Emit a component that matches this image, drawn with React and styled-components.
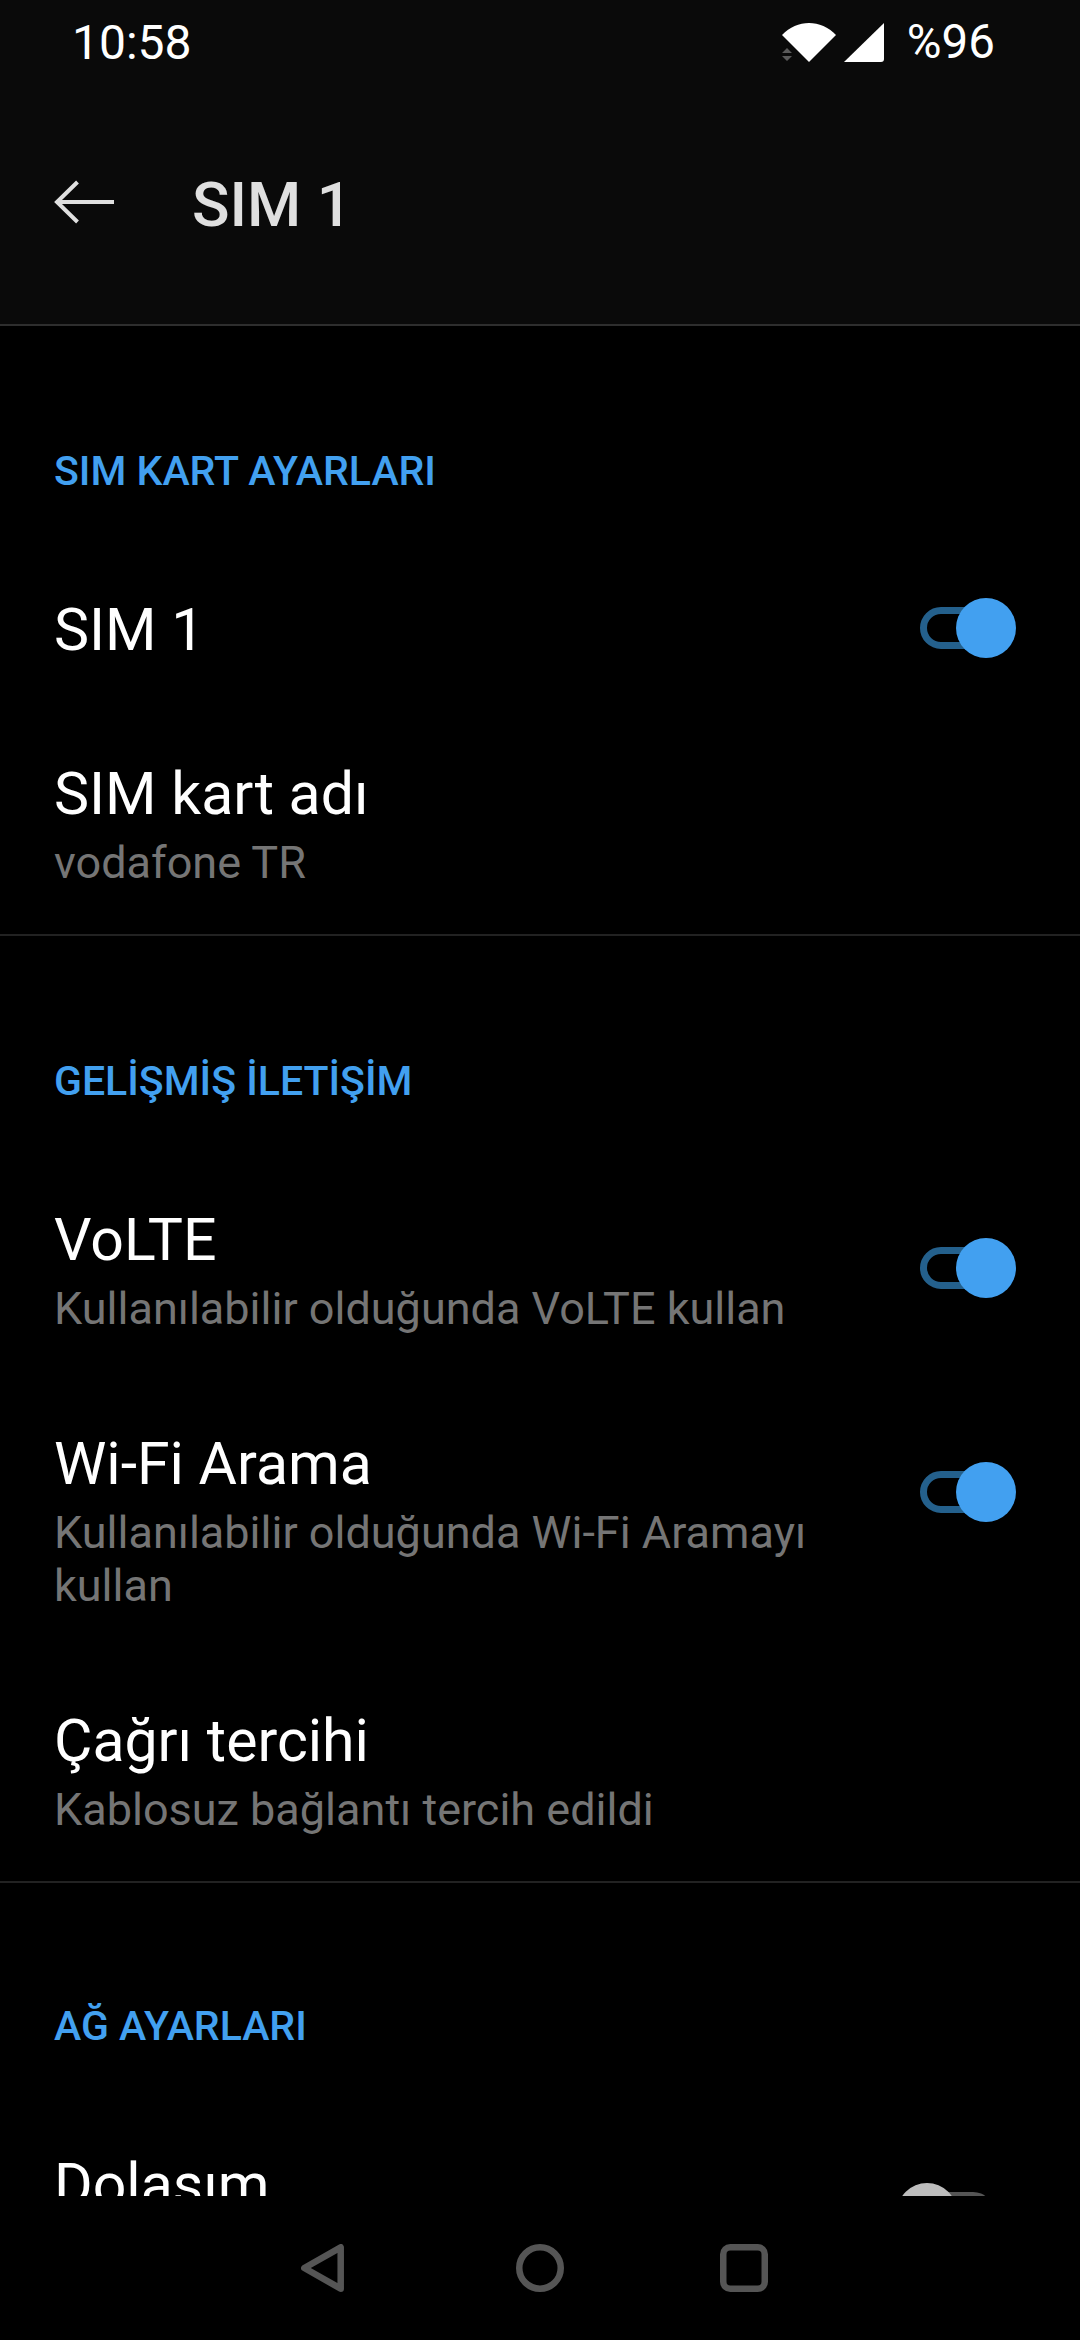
import React from "react";
import styled, { createGlobalStyle } from "styled-components";

const GlobalStyle = createGlobalStyle`
  html, body {
    margin: 0;
    padding: 0;
    background: #000;
  }
  * {
    box-sizing: border-box;
  }
`;

function App() {
  return (
    <Screen>
      <GlobalStyle />
      <Header>
        <StatusBar>
          <Clock>10:58</Clock>
          <StatusIcons>
            <svg width="54" height="39" viewBox="0 0 54 39">
              <path d="M0 12 C15 -4 39 -4 54 12 L27 39 Z" fill="#fff" />
              <path d="M0 30 L5 25 L10 30 Z M0 33 L10 33 L5 38 Z" fill="#5a5a5a" />
            </svg>
            <svg width="40" height="39" viewBox="0 0 40 39">
              <path d="M40 0 V36 Q40 39 37 39 H0 Z" fill="#fff" />
            </svg>
            <Battery>%96</Battery>
          </StatusIcons>
        </StatusBar>
        <Toolbar>
          <svg width="60" height="44" viewBox="0 0 60 44">
            <path d="M60 22 H4 M23.5 2 L3 22 L23.5 42" fill="none" stroke="#e0e0e0" strokeWidth="4" />
          </svg>
          <PageTitle>SIM 1</PageTitle>
        </Toolbar>
      </Header>
      <Content>
        <Section>
          <SectionTitle>SIM KART AYARLARI</SectionTitle>
          <Row $single>
            <RowText $single>
              <RowTitle>SIM 1</RowTitle>
            </RowText>
            <Switch $on />
          </Row>
          <Row>
            <RowText>
              <RowTitle>SIM kart adı</RowTitle>
              <RowSub>vodafone TR</RowSub>
            </RowText>
          </Row>
        </Section>
        <Section>
          <SectionTitle>GELİŞMİŞ İLETİŞİM</SectionTitle>
          <Row>
            <RowText>
              <RowTitle>VoLTE</RowTitle>
              <RowSub>Kullanılabilir olduğunda VoLTE kullan</RowSub>
            </RowText>
            <Switch $on $lowered />
          </Row>
          <Row>
            <RowText>
              <RowTitle>Wi-Fi Arama</RowTitle>
              <RowSub>Kullanılabilir olduğunda Wi-Fi Aramayı kullan</RowSub>
            </RowText>
            <Switch $on $lowered />
          </Row>
          <Row>
            <RowText>
              <RowTitle>Çağrı tercihi</RowTitle>
              <RowSub>Kablosuz bağlantı tercih edildi</RowSub>
            </RowText>
          </Row>
        </Section>
        <Section $top={118}>
          <SectionTitle>AĞ AYARLARI</SectionTitle>
          <Row>
            <RowText>
              <RowTitle>Dolaşım</RowTitle>
            </RowText>
            <Switch $lowered />
          </Row>
        </Section>
      </Content>
      <NavBar>
        <NavIcon $after={172} width="43" height="48" viewBox="0 0 43 48">
          <path d="M39.7 3.3 V44.7 L3.3 24 Z" fill="none" stroke="#555" strokeWidth="6.5" strokeLinejoin="round" />
        </NavIcon>
        <NavIcon $after={156} width="48" height="48" viewBox="0 0 48 48">
          <circle cx="24" cy="24" r="20.75" fill="none" stroke="#555" strokeWidth="6.5" />
        </NavIcon>
        <NavIcon width="48" height="48" viewBox="0 0 48 48">
          <rect x="3.25" y="3.25" width="41.5" height="41.5" rx="7" fill="none" stroke="#555" strokeWidth="6.5" />
        </NavIcon>
      </NavBar>
    </Screen>
  );
}

function Switch({ $on, $lowered }) {
  return (
    <SwitchBox $lowered={$lowered}>
      <Track $on={$on} />
      <Thumb $on={$on} />
    </SwitchBox>
  );
}

export default App;

const Screen = styled.div`
  width: 1080px;
  height: 2340px;
  display: flex;
  flex-direction: column;
  overflow: hidden;
  background: #000;
  color: #fff;
  font-family: Roboto, "Noto Sans", sans-serif;
`;

const Header = styled.header`
  flex: none;
  height: 326px;
  background: #0a0a0a;
  border-bottom: 2px solid #2e2e2e;
`;

const StatusBar = styled.div`
  height: 84px;
  display: flex;
  align-items: center;
  justify-content: space-between;
  padding: 0 85px 0 72px;
`;

const Clock = styled.span`
  font-size: 48px;
`;

const StatusIcons = styled.div`
  display: flex;
  align-items: center;
  gap: 8px;
`;

const Battery = styled.span`
  font-size: 47.5px;
  margin-left: 15px;
`;

const Toolbar = styled.div`
  height: 240px;
  display: flex;
  align-items: center;
  padding-left: 54px;
  gap: 78px;
  svg {
    margin-top: -4px;
  }
`;

const PageTitle = styled.h1`
  margin: 0;
  font-size: 62px;
  font-weight: 500;
  color: #e0e0e0;
`;

const Content = styled.main`
  flex: 1;
  min-height: 0;
  overflow: hidden;
`;

const Section = styled.section`
  padding-top: ${(props) => props.$top || 120}px;
  border-bottom: 2px solid #222;
  &:last-child {
    border-bottom: none;
  }
`;

const SectionTitle = styled.h2`
  margin: 0 0 50px;
  padding: 0 54px;
  font-size: 41px;
  line-height: 50px;
  font-weight: 500;
  color: #42a0f0;
`;

const Row = styled.div`
  display: flex;
  justify-content: space-between;
  align-items: ${(props) => (props.$single ? "center" : "flex-start")};
  padding: ${(props) => (props.$single ? "0" : "54px")} 64px ${(props) => (props.$single ? "0" : "45px")} 54px;
  min-height: ${(props) => (props.$single ? "164px" : "0")};
`;

const RowText = styled.div`
  width: 800px;
  padding-top: ${(props) => (props.$single ? "3px" : "0")};
`;

const RowTitle = styled.div`
  font-size: 59px;
  line-height: 60px;
`;

const RowSub = styled.div`
  margin-top: 12px;
  font-size: 45px;
  line-height: 53px;
  color: #757575;
`;

const SwitchBox = styled.div`
  position: relative;
  flex: none;
  width: 96px;
  height: 60px;
  margin-top: ${(props) => (props.$lowered ? "28px" : "0")};
`;

const Track = styled.div`
  position: absolute;
  top: 9px;
  left: 0;
  width: 74px;
  height: 42px;
  border-radius: 21px;
  border: ${(props) => (props.$on ? "7px solid #24608c" : "none")};
  background: ${(props) => (props.$on ? "transparent" : "#555")};
`;

const Thumb = styled.div`
  position: absolute;
  top: 0;
  left: ${(props) => (props.$on ? "36px" : "-23px")};
  width: 60px;
  height: 60px;
  border-radius: 50%;
  background: ${(props) => (props.$on ? "#42a0f0" : "#bdbdbd")};
`;

const NavBar = styled.nav`
  flex: none;
  height: 144px;
  display: flex;
  align-items: flex-start;
  padding: 48px 0 0 301px;
  background: #000;
`;

const NavIcon = styled.svg`
  margin-right: ${(props) => props.$after || 0}px;
`;
